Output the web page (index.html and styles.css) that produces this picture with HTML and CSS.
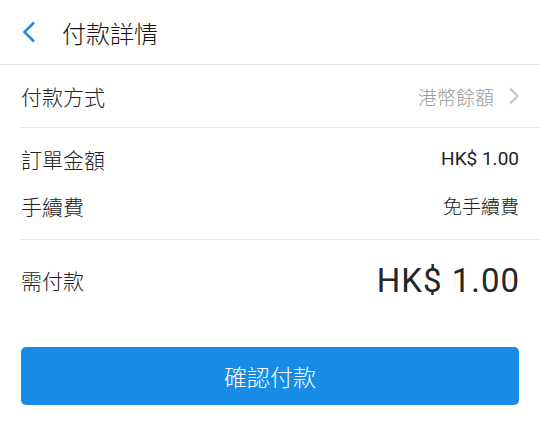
FILE: index.html
```html
<!DOCTYPE html>
<html lang="zh-Hant">
<head>
  <meta charset="UTF-8">
  <meta name="viewport" content="width=device-width, initial-scale=1.0">
  <title>付款詳情</title>
  <link rel="stylesheet" href="styles.css">
</head>
<body>
  <header class="top-bar">
    <svg class="back-icon" width="14" height="22" viewBox="0 0 14 22">
      <path d="M12 1.5 L2.5 11 L12 20.5" fill="none" stroke="#2a8ae0" stroke-width="2.6"/>
    </svg>
    <h1>付款詳情</h1>
  </header>

  <div class="section">
    <div class="row method">
      <span class="label">付款方式</span>
      <span class="method-value">
        港幣餘額
        <svg class="arrow" width="12" height="18" viewBox="0 0 12 18">
          <path d="M2 1.5 L9.5 9 L2 16.5" fill="none" stroke="#c8c8c8" stroke-width="2.4"/>
        </svg>
      </span>
    </div>
  </div>

  <div class="section details">
    <div class="row small">
      <span class="label">訂單金額</span>
      <span class="value num">HK$ 1.00</span>
    </div>
    <div class="row small">
      <span class="label">手續費</span>
      <span class="value">免手續費</span>
    </div>
  </div>

  <div class="section total">
    <div class="row">
      <span class="label">需付款</span>
      <span class="total-value num">HK$ 1.00</span>
    </div>
  </div>

  <div class="actions">
    <button class="pay-btn">確認付款</button>
  </div>
</body>
</html>
```

FILE: styles.css
```css
body {
  margin: 0;
  background-color: #fff;
  font-family: Roboto, "Noto Sans CJK TC", sans-serif;
  font-weight: 300;
  color: #222;
}
.top-bar {
  display: flex;
  align-items: center;
  height: 64px;
  padding-left: 22px;
  border-bottom: 1px solid #e2e2e2;
}
.top-bar h1 {
  margin: 0 0 0 26px;
  font-size: 24px;
  font-weight: 300;
  color: #111;
}
.back-icon {
  display: block;
}
.section {
  margin-left: 20px;
  border-bottom: 1px solid #e6e6e6;
}
.row {
  display: flex;
  justify-content: space-between;
  align-items: center;
  padding-left: 1px;
  padding-right: 21px;
}
.label {
  font-size: 21px;
}
.method {
  height: 62px;
  padding-right: 20px;
}
.method-value {
  display: flex;
  align-items: center;
  gap: 14px;
  font-size: 19px;
  color: #9a9a9a;
}
.arrow {
  display: block;
}
.details {
  padding: 7px 0 10px;
}
.row.small {
  height: 47px;
}
.value {
  font-size: 19px;
}
.num {
  font-family: Roboto, sans-serif;
  font-weight: 400;
}
.total {
  border-bottom: none;
}
.total .row {
  height: 80px;
}
.total-value {
  font-size: 33px;
  letter-spacing: 1px;
  margin-right: -1px;
  color: #262626;
}
.actions {
  padding: 27px 21px 0 21px;
}
.pay-btn {
  display: block;
  width: 100%;
  height: 58px;
  border: none;
  border-radius: 5px;
  background-color: #168ce8;
  color: #fff;
  font-family: "Noto Sans CJK TC", sans-serif;
  font-weight: 300;
  font-size: 23px;
}
```
